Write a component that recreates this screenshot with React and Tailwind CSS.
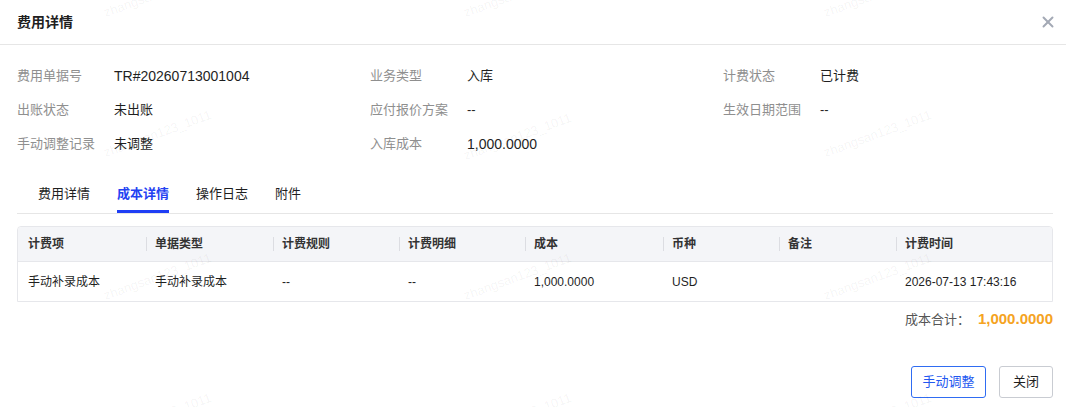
import React from 'react';
import { X } from 'lucide-react';

const info = [
  ['费用单据号', 'TR#20260713001004'],
  ['业务类型', '入库'],
  ['计费状态', '已计费'],
  ['出账状态', '未出账'],
  ['应付报价方案', '--'],
  ['生效日期范围', '--'],
  ['手动调整记录', '未调整'],
  ['入库成本', '1,000.0000'],
];

const tabs = ['费用详情', '成本详情', '操作日志', '附件'];

const columns = [
  { title: '计费项', w: 'w-[128px]' },
  { title: '单据类型', w: 'w-[127px]' },
  { title: '计费规则', w: 'w-[126px]' },
  { title: '计费明细', w: 'w-[126px]' },
  { title: '成本', w: 'w-[138px]' },
  { title: '币种', w: 'w-[116px]' },
  { title: '备注', w: 'w-[117px]' },
  { title: '计费时间', w: 'flex-1' },
];

const row = ['手动补录成本', '手动补录成本', '--', '--', '1,000.0000', 'USD', '', '2026-07-13 17:43:16'];

// faint user watermark tiled over the dialog
const marks = [
  [157, -8], [517, -8], [877, -8],
  [157, 132], [517, 135], [877, 132],
  [157, 275], [517, 275], [877, 275],
  [157, 415], [517, 415], [877, 415],
];

export default function App() {
  return (
    <div
      className="relative w-[1066px] h-[407px] overflow-hidden bg-white text-[#1f1f1f]"
      style={{ fontFamily: '"Liberation Sans", "Noto Sans CJK SC", sans-serif' }}
    >
      {/* header */}
      <div className="h-[45px] flex items-center justify-between pl-[17px] pr-[9px] border-b border-[#e6e6e6]">
        <span className="text-[14px] font-bold">费用详情</span>
        <X size={18} strokeWidth={2.6} className="text-[#a3a9b5]" />
      </div>

      <div className="pl-[17px] pr-[13px]">
        {/* summary fields */}
        <div className="grid grid-cols-[353px_353px_1fr] pt-[14px] text-[13px]">
          {info.map(([label, value]) => (
            <div key={label} className="h-[34px] flex items-center">
              <span className="w-[97px] text-[#8f8f8f]">{label}</span>
              <span className={/\d/.test(value) ? 'text-[14px]' : ''}>{value}</span>
            </div>
          ))}
        </div>

        {/* tabs */}
        <div className="mt-[14px] flex gap-[27px] pl-[21px] border-b border-[#e6e6e6] text-[13px]">
          {tabs.map((t, i) => (
            <div
              key={t}
              className={
                i === 1
                  ? 'h-[38px] flex items-center border-b-[3px] border-[#1f3ef5] text-[#2442f2] font-semibold pt-[3px] -mb-px'
                  : 'h-[38px] flex items-center'
              }
            >
              {t}
            </div>
          ))}
        </div>

        {/* cost table */}
        <div className="mt-[12px] border border-[#e6e7eb] rounded-t-[4px] text-[12px]">
          <div className="h-[35px] flex items-center bg-[#f4f5f8] border-b border-[#e6e7eb] rounded-t-[4px] font-semibold text-[#333]">
            {columns.map((c, i) => (
              <div key={c.title} className={`${c.w} flex items-center`}>
                {i > 0 && <span className="w-px h-[14px] bg-[#dcdde2]" />}
                <span className={i > 0 ? 'pl-[8px]' : 'pl-[10px]'}>{c.title}</span>
              </div>
            ))}
          </div>
          <div className="h-[39px] flex items-center">
            {columns.map((c, i) => (
              <div key={c.title} className={`${c.w} ${i > 0 ? 'pl-[9px]' : 'pl-[10px]'}`}>
                {row[i]}
              </div>
            ))}
          </div>
        </div>

        {/* total */}
        <div className="mt-[6px] flex justify-end items-center text-[13px]">
          <span className="text-[#555]">成本合计：</span>
          <span className="ml-[8px] text-[15px] font-bold text-[#f5a322]">1,000.0000</span>
        </div>

        {/* footer buttons */}
        <div className="mt-[35px] flex justify-end gap-[13px] text-[13px]">
          <button className="h-[32px] w-[75px] rounded-[3px] border border-[#2f6cf2] text-[#2358f0] bg-white">
            手动调整
          </button>
          <button className="h-[32px] w-[54px] rounded-[3px] border border-[#c9ccd2] bg-white">
            关闭
          </button>
        </div>
      </div>

      {marks.map(([x, y], i) => (
        <span
          key={i}
          className="absolute pointer-events-none select-none text-[13px] text-[#000]/[0.05] -rotate-[20deg] whitespace-nowrap"
          style={{ left: x - 56, top: y - 8 }}
        >
          zhangsan123_1011
        </span>
      ))}
    </div>
  );
}
